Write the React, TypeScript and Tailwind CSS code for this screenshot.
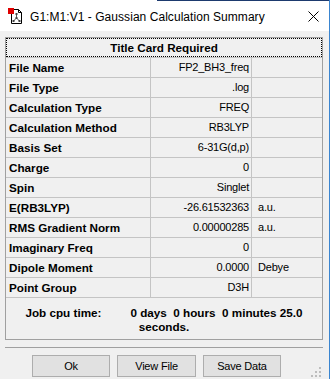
import React from "react";

const rows: [string, string, string][] = [
  ["File Name", "FP2_BH3_freq", ""],
  ["File Type", ".log", ""],
  ["Calculation Type", "FREQ", ""],
  ["Calculation Method", "RB3LYP", ""],
  ["Basis Set", "6-31G(d,p)", ""],
  ["Charge", "0", ""],
  ["Spin", "Singlet", ""],
  ["E(RB3LYP)", "-26.61532363", "a.u."],
  ["RMS Gradient Norm", "0.00000285", "a.u."],
  ["Imaginary Freq", "0", ""],
  ["Dipole Moment", "0.0000", "Debye"],
  ["Point Group", "D3H", ""],
];

function AppIcon() {
  return (
    <svg width="16" height="17" viewBox="0 0 16 17" className="shrink-0">
      <path d="M3.5 1.5 H10.5 L13.5 4.5 V15.5 H3.5 Z" fill="#fff" stroke="#000" strokeWidth="1" />
      <path d="M10.5 1.5 V4.5 H13.5" fill="none" stroke="#000" strokeWidth="1" />
      <path d="M8.5 6 L8.5 10 L5.5 13 M8.5 10 L11.5 13" fill="none" stroke="#555" strokeWidth="1" />
      <rect x="7.5" y="5" width="2" height="2" fill="#444" />
      <rect x="4.5" y="12" width="2" height="2" fill="#444" />
      <rect x="10.5" y="12" width="2" height="2" fill="#444" />
      <rect x="7.5" y="9" width="2" height="2" fill="#444" />
      <rect x="0" y="0" width="6" height="6" fill="#e00000" />
    </svg>
  );
}

function Grip() {
  return (
    <svg width="10" height="10" viewBox="0 0 10 10">
      <rect x="8" y="0" width="2" height="2" fill="#bdbdbd" />
      <rect x="4" y="4" width="2" height="2" fill="#bdbdbd" />
      <rect x="8" y="4" width="2" height="2" fill="#bdbdbd" />
      <rect x="0" y="8" width="2" height="2" fill="#bdbdbd" />
      <rect x="4" y="8" width="2" height="2" fill="#bdbdbd" />
      <rect x="8" y="8" width="2" height="2" fill="#bdbdbd" />
    </svg>
  );
}

export default function App() {
  return (
    <div
      className="w-[332px] h-[379px] flex overflow-hidden bg-white text-black"
      style={{ fontFamily: '"Liberation Sans", Arial, sans-serif' }}
    >
      <div className="w-[329px] h-full flex flex-col bg-[#f0f0f0]">
        {/* title bar */}
        <div className="h-[31px] bg-white flex flex-col shrink-0">
          <div className="h-px flex">
            <div className="w-[157px]" />
            <div className="flex-1 bg-[#1d3a6e]" />
          </div>
          <div className="flex-1 flex items-center pl-[8px] pr-[10px]">
            <div className="mt-[1px]">
              <AppIcon />
            </div>
            <span className="ml-[6px] text-[12px] leading-none mt-[1px] tracking-[0.05px]">
              G1:M1:V1 - Gaussian Calculation Summary
            </span>
            <div className="flex-1" />
            <svg width="11" height="11" viewBox="0 0 11 11" className="mt-[1px]">
              <path d="M0.5 0.5 L10.5 10.5 M10.5 0.5 L0.5 10.5" stroke="#000" strokeWidth="1" />
            </svg>
          </div>
        </div>

        {/* body */}
        <div className="flex-1 flex flex-col pl-[5px] pt-[6px]">
          <div className="w-[318px] border border-[#a0a0a0] flex flex-col">
            <div className="h-[20px] border-b border-[#c4c4c4] flex">
              <div className="flex-1 h-[19px] border border-dotted border-black flex items-center justify-center font-bold text-[11.7px] leading-none">
                Title Card Required
              </div>
            </div>
            {rows.map(([label, value, unit]) => (
              <div key={label} className="h-[20px] border-b border-[#c4c4c4] flex items-center">
                <div className="w-[145px] h-full border-r border-[#c4c4c4] flex items-center pl-[3px] font-bold text-[11.7px] leading-none">
                  {label}
                </div>
                <div className="w-[101px] h-full border-r border-[#c4c4c4] flex items-center justify-end pr-[2px] text-[11px] tracking-[-0.2px] leading-none">
                  {value}
                </div>
                <div className="flex-1 h-full flex items-center pl-[6px] text-[11px] tracking-[-0.2px] leading-none">
                  {unit}
                </div>
              </div>
            ))}
            <div className="h-[41px] flex flex-col items-center justify-center font-bold text-[11.7px] leading-[14px] pt-[2px]">
              <div className="whitespace-pre">
                Job cpu time:<span className="inline-block w-[29px]" />0 days  0 hours  0 minutes 25.0
              </div>
              <div>seconds.</div>
            </div>
          </div>

          <div className="mt-[7px] w-[318px] h-px bg-[#a0a0a0]" />

          <div className="mt-[7px] flex items-start pl-[27px] gap-[7px]">
            <button className="w-[78px] h-[22px] bg-[#e1e1e1] border border-[#adadad] text-[11px] tracking-[-0.2px] leading-none">
              Ok
            </button>
            <button className="w-[79px] h-[22px] bg-[#e1e1e1] border border-[#adadad] text-[11px] tracking-[-0.2px] leading-none">
              View File
            </button>
            <button className="w-[78px] h-[22px] bg-[#e1e1e1] border border-[#adadad] text-[11px] tracking-[-0.2px] leading-none">
              Save Data
            </button>
            <div className="flex-1" />
            <div className="mt-[12px] mr-[8px]">
              <Grip />
            </div>
          </div>
        </div>
      </div>
      <div className="w-px h-full bg-[#3a85d0]" />
      <div className="flex-1 h-full bg-white" />
    </div>
  );
}
